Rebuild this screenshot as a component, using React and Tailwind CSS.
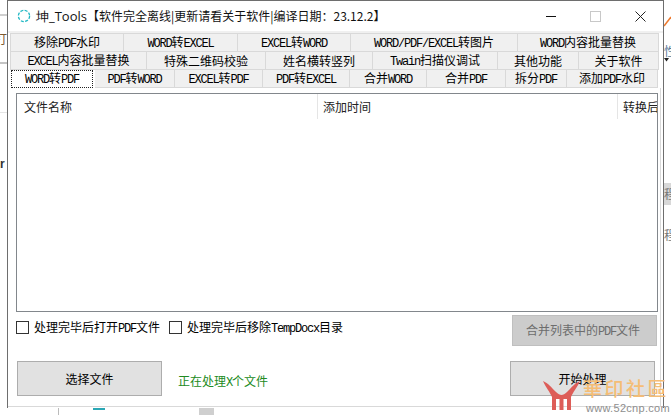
import React from "react";

const cjk = '"Noto Sans CJK SC", sans-serif';

function T({ children }) {
  const parts = children.match(/[A-Za-z/]+|[^A-Za-z/]+/g) || [];
  return (
    <span className="whitespace-nowrap text-[12px] leading-[14px] font-['Noto_Sans_CJK_SC',sans-serif]">
      {parts.map((p, i) =>
        /[A-Za-z/]/.test(p[0]) ? (
          <span key={i} className="font-['Liberation_Mono',monospace] text-[12px] tracking-[-1.2px]">{p}</span>
        ) : (
          <span key={i}>{p}</span>
        )
      )}
    </span>
  );
}

const row1 = [["移除PDF水印", 113], ["WORD转EXCEL", 114], ["EXCEL转WORD", 113], ["WORD/PDF/EXCEL转图片", 167], ["WORD内容批量替换", 141]];
const row2 = [["EXCEL内容批量替换", 136], ["特殊二维码校验", 119], ["姓名横转竖列", 107], ["Twain扫描仪调试", 125], ["其他功能", 81], ["关于软件", 80]];
const row3 = [["PDF转WORD", 80], ["EXCEL转PDF", 88], ["PDF转EXCEL", 87], ["合并WORD", 77], ["合并PDF", 79], ["拆分PDF", 61], ["添加PDF水印", 91]];

function Tab({ label, w }) {
  return (
    <div style={{ width: w }} className="h-[18px] shrink-0 flex items-center justify-center bg-[#f0f0f0] border-r border-b border-[#d9d9d9] text-black">
      <T>{label}</T>
    </div>
  );
}

function Check({ label }) {
  return (
    <div className="flex items-center gap-[5px]">
      <div className="w-[13px] h-[13px] border border-[#333333] bg-white" />
      <T>{label}</T>
    </div>
  );
}

function Watermark() {
  return (
    <div className="absolute left-[543px] top-[378px] w-[128px] h-[37px] z-10">
      <svg className="absolute left-0 top-[2px]" width="37" height="32" viewBox="0 0 37 32">
        <path d="M0 1 C5 3 9 8 13 12 C15 14 17 15 18.5 15 C20 15 22 14 24 12 C28 8 32 3 37 1 C34 8 30 12 28 17 L28 30 L24 30 L24 19 L20.5 19 L20.5 30 L16.5 30 L16.5 19 L13 19 L13 30 L9 30 L9 17 C7 12 3 8 0 1Z" fill="#dd5d58" />
      </svg>
      <div className="absolute left-[40px] top-[-2px] text-[19px] leading-[24px] tracking-[2.5px] font-medium text-[#f5bd75] font-['Noto_Sans_CJK_SC',sans-serif] whitespace-nowrap">華印社區</div>
      <div className="absolute left-[43px] top-[24px] text-[11px] leading-[12px] tracking-[0.3px] text-[#8e8e8e] font-['Liberation_Sans',sans-serif] whitespace-nowrap">www.52cnp.com</div>
    </div>
  );
}

function Backdrop() {
  return (
    <>
      <div className="absolute left-0 top-[14px] w-[7px] h-[2px] bg-[#cfcfcf]" />
      <div className="absolute left-0 top-[62px] w-[7px] h-[2px] bg-[#c4c4c4]" />
      <div className="absolute left-0 top-[32px] text-[12px] leading-[14px] text-[#7a5a30] font-['Noto_Sans_CJK_SC',sans-serif] w-[7px] overflow-hidden flex justify-end"><span className="shrink-0">打</span></div>
      <div className="absolute left-0 top-[157px] text-[12px] leading-[14px] font-bold text-[#333333] font-['Liberation_Sans',sans-serif]">r</div>
      <div className="absolute left-0 top-[112px] w-[7px] h-px bg-[#e5e5e5]" />
      <div className="absolute left-[664px] top-[15px] w-[7px] h-[12px] overflow-hidden">
        <svg width="7" height="12"><path d="M0 11 L7 2" stroke="#ee7b30" strokeWidth="1.6" /></svg>
      </div>
      <div className="absolute left-[664px] top-[44px] w-[7px] overflow-hidden text-[12px] leading-[14px] text-[#5a7a99] font-['Noto_Sans_CJK_SC',sans-serif]">性</div>
      <svg className="absolute left-[664px] top-[58px]" width="5" height="4"><path d="M0 0 H5 L2.5 3.5Z" fill="#222222" /></svg>
      <div className="absolute left-[664px] top-[183px] w-[7px] h-[22px] bg-[#d8d8d8] overflow-hidden text-[12px] leading-[22px] text-[#777777] font-['Noto_Sans_CJK_SC',sans-serif]">程</div>
      <div className="absolute left-[664px] top-[228px] w-[7px] overflow-hidden text-[12px] leading-[14px] text-[#777777] font-['Noto_Sans_CJK_SC',sans-serif]">程</div>
      <div className="absolute left-[58px] top-[408px] w-px h-[7px] bg-[#bbbbbb]" />
      <div className="absolute left-[93px] top-[408px] w-[12px] h-[2px] bg-[#2aa7b5]" />
      <div className="absolute left-[199px] top-[408px] w-[15px] h-[7px] bg-[#cfcfcf]" />
    </>
  );
}

export default function App() {
  return (
    <div className="relative w-[671px] h-[415px] bg-white overflow-hidden" style={{ fontFamily: cjk }}>
      <Backdrop />
      <div className="absolute left-[7px] top-0 w-[657px] h-[408px] bg-white border border-[#6e6e6e] flex flex-col">
        {/* title bar */}
        <div className="h-[30px] shrink-0 flex items-center bg-white">
          <svg className="ml-[9px]" width="14" height="14" viewBox="0 0 14 14">
            <circle cx="7" cy="7" r="5.6" fill="none" stroke="#22b8c4" strokeWidth="1.3" strokeDasharray="3 1.4" />
          </svg>
          <span className="ml-[5px] text-[12px] leading-[16px] text-[#111111] font-['Noto_Sans_CJK_SC',sans-serif] whitespace-nowrap">
            <span className="font-['Open_Sans',sans-serif] text-[13px]">坤_Tools</span>【软件完全离线|更新请看关于软件|编译日期：23.12.2】
          </span>
          <div className="ml-auto flex items-center">
            <svg width="12" height="12" viewBox="0 0 12 12" className="mr-[33px]"><path d="M1 6.5 H11" stroke="#111111" strokeWidth="1" /></svg>
            <svg width="11" height="11" viewBox="0 0 11 11" className="mr-[34px]"><rect x="0.5" y="0.5" width="10" height="10" fill="none" stroke="#c8c8c8" /></svg>
            <svg width="11" height="11" viewBox="0 0 11 11" className="mr-[17px]"><path d="M0.5 0.5 L10.5 10.5 M10.5 0.5 L0.5 10.5" stroke="#222222" strokeWidth="1" /></svg>
          </div>
        </div>
        {/* tab strip */}
        <div className="flex-1 flex flex-col bg-white">
          <div className="h-[2px] shrink-0 bg-[#f0f0f0]" />
          <div className="flex border-t border-l border-[#d9d9d9] w-[649px] ml-[2px]">
            {row1.map(([l, w]) => <Tab key={l} label={l} w={w} />)}
          </div>
          <div className="flex border-l border-[#d9d9d9] w-[649px] ml-[2px]">
            {row2.map(([l, w]) => <Tab key={l} label={l} w={w} />)}
          </div>
          <div className="flex w-[649px] items-start ml-[2px]">
            <div className="w-[82px] h-[18px] ml-[1px] mr-[2px] shrink-0 bg-white border border-dotted border-[#222222] flex items-center justify-center">
              <T>WORD转PDF</T>
            </div>
            {row3.map(([l, w]) => <Tab key={l} label={l} w={w} />)}
          </div>
          {/* panel */}
          <div className="flex-1 bg-white mr-[2px] mb-[1px] border-r border-b border-[#d9d9d9] flex flex-col pl-[8px] pt-[5px] pb-[10px]">
            <div className="w-[642px] h-[219px] shrink-0 border border-[#82878c] bg-white">
              <div className="h-[25px] flex items-center text-[#222222]">
                <div className="w-[301px] h-full pl-[7px] flex items-center border-r border-[#e5e5e5]"><T>文件名称</T></div>
                <div className="w-[300px] h-full pl-[5px] flex items-center border-r border-[#e5e5e5]"><T>添加时间</T></div>
                <div className="flex-1 overflow-hidden h-full pl-[5px] flex items-center"><T>转换后</T></div>
              </div>
            </div>
            <div className="flex mt-[3px] h-[31px] shrink-0 justify-between">
              <div className="flex items-center gap-[9px] h-[25px]">
                <Check label="处理完毕后打开PDF文件" />
                <Check label="处理完毕后移除TempDocx目录" />
              </div>
              <div className="w-[145px] h-[31px] mr-[3px] pr-[3px] bg-[#cccccc] border border-[#bfbfbf] flex items-center justify-center text-[#6d6d6d]">
                <T>合并列表中的PDF文件</T>
              </div>
            </div>
            <div className="flex items-center mt-[15px] h-[35px] shrink-0">
              <div className="w-[145px] h-full ml-[1px] bg-[#e1e1e1] border border-[#adadad] flex items-center justify-center"><T>选择文件</T></div>
              <div className="ml-[16px] text-[#218a21]"><T>正在处理X个文件</T></div>
              <div className="w-[145px] h-full ml-auto mr-[5px] bg-[#e1e1e1] border border-[#adadad] flex items-center justify-center"><T>开始处理</T></div>
            </div>
          </div>
        </div>
      </div>
      <Watermark />
    </div>
  );
}
